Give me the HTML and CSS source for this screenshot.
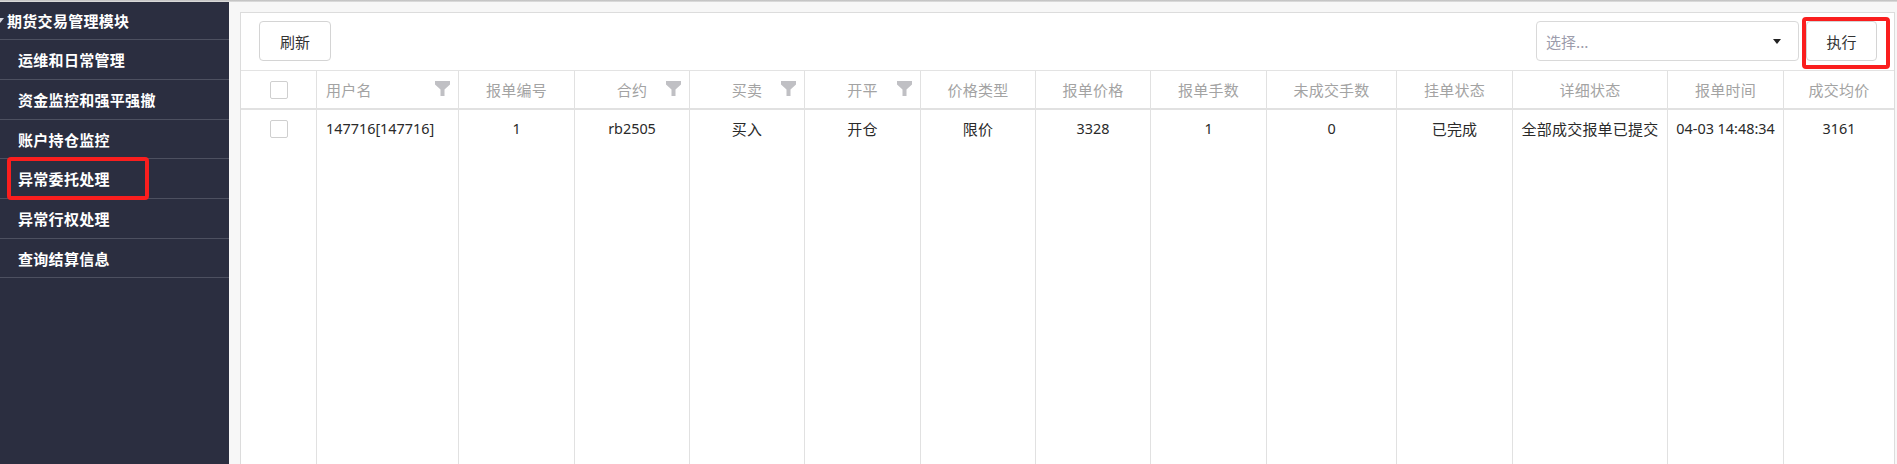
FILE: index.html
```html
<!DOCTYPE html>
<html lang="zh-CN">
<head>
<meta charset="utf-8">
<title>异常委托处理</title>
<link rel="stylesheet" href="styles.css">
</head>
<body>
<div class="topline"></div>
<div class="app">
  <aside class="sidebar">
    <ul class="menu">
      <li class="menu-item menu-root"><svg class="caret" width="8" height="5" viewBox="0 0 8 5"><path d="M0 0H8L4 5Z" fill="#d8d8e0"/></svg>期货交易管理模块</li>
      <li class="menu-item">运维和日常管理</li>
      <li class="menu-item">资金监控和强平强撤</li>
      <li class="menu-item">账户持仓监控</li>
      <li class="menu-item marked">异常委托处理<span class="mark mark-side"></span></li>
      <li class="menu-item">异常行权处理</li>
      <li class="menu-item">查询结算信息</li>
    </ul>
  </aside>
  <main class="main">
    <section class="panel">
      <div class="toolbar">
        <button class="btn">刷新</button>
        <div class="actions">
          <div class="select"><span class="placeholder">选择...</span><span class="arrow"></span></div>
          <div class="exec-wrap"><button class="btn btn-exec">执行</button><span class="mark mark-exec"></span></div>
        </div>
      </div>
      <div class="grid">
        <div class="th"><span class="cb"></span></div>
        <div class="th left">用户名<svg class="filter" width="15" height="15" viewBox="0 0 15 15"><path d="M0 0H15V3.5L9.5 8.5V15H5.5V8.5L0 3.5Z"/></svg></div>
        <div class="th">报单编号</div>
        <div class="th">合约<svg class="filter" width="15" height="15" viewBox="0 0 15 15"><path d="M0 0H15V3.5L9.5 8.5V15H5.5V8.5L0 3.5Z"/></svg></div>
        <div class="th">买卖<svg class="filter" width="15" height="15" viewBox="0 0 15 15"><path d="M0 0H15V3.5L9.5 8.5V15H5.5V8.5L0 3.5Z"/></svg></div>
        <div class="th">开平<svg class="filter" width="15" height="15" viewBox="0 0 15 15"><path d="M0 0H15V3.5L9.5 8.5V15H5.5V8.5L0 3.5Z"/></svg></div>
        <div class="th">价格类型</div>
        <div class="th">报单价格</div>
        <div class="th">报单手数</div>
        <div class="th">未成交手数</div>
        <div class="th">挂单状态</div>
        <div class="th">详细状态</div>
        <div class="th">报单时间</div>
        <div class="th last">成交均价</div>

        <div class="td"><span class="cb"></span></div>
        <div class="td left num">147716[147716]</div>
        <div class="td num">1</div>
        <div class="td num">rb2505</div>
        <div class="td">买入</div>
        <div class="td">开仓</div>
        <div class="td">限价</div>
        <div class="td num">3328</div>
        <div class="td num">1</div>
        <div class="td num">0</div>
        <div class="td">已完成</div>
        <div class="td">全部成交报单已提交</div>
        <div class="td num">04-03 14:48:34</div>
        <div class="td num last">3161</div>

        <div class="tf"></div><div class="tf"></div><div class="tf"></div><div class="tf"></div>
        <div class="tf"></div><div class="tf"></div><div class="tf"></div><div class="tf"></div>
        <div class="tf"></div><div class="tf"></div><div class="tf"></div><div class="tf"></div>
        <div class="tf"></div><div class="tf last"></div>
      </div>
    </section>
  </main>
</div>
</body>
</html>
```
FILE: styles.css
```css
* { box-sizing: border-box; }
html, body {
  margin: 0;
  height: 464px;
  overflow: hidden;
}
body {
  font-family: "Noto Sans", "Noto Sans CJK SC", sans-serif;
  font-size: 15px;
  color: #333;
  background: #f7f7f7;
}
.topline {
  height: 2px;
  background: linear-gradient(#bcbcbc, #e2e2e2);
}
.app {
  display: flex;
  height: 462px;
}

/* sidebar */
.sidebar {
  width: 229px;
  flex: none;
  background: #2b2e40;
}
.menu {
  list-style: none;
  margin: 0;
  padding: 0;
}
.menu-item {
  position: relative;
  height: 39.7px;
  border-bottom: 1px solid #4d5060;
  padding-left: 18px;
  display: flex;
  align-items: center;
  color: #fff;
  font-weight: bold;
  font-size: 15px;
  letter-spacing: 0.3px;
  font-family: "Noto Sans CJK SC", sans-serif;
}
.menu-root {
  height: 38.3px;
  padding-left: 0;
}
.caret {
  margin-left: -4px;
  margin-right: 3px;
}
.mark {
  position: absolute;
  border: 4px solid #fa1e1e;
  border-radius: 4px;
  pointer-events: none;
}
.mark-side {
  left: 7px;
  top: -2px;
  width: 142px;
  height: 43px;
}

/* main */
.main {
  flex: 1;
  padding: 10px 2px 0 11px;
  min-width: 0;
}
.panel {
  height: 100%;
  background: #fff;
  border: 1px solid #dcdcdc;
  border-bottom: none;
  display: flex;
  flex-direction: column;
}
.toolbar {
  display: flex;
  justify-content: space-between;
  align-items: center;
  padding: 8px 17px 9px 18px;
}
.btn {
  height: 40px;
  width: 72px;
  background: #fff;
  border: 1px solid #d4d4d4;
  border-radius: 4px;
  font-family: "Noto Sans CJK SC", sans-serif;
  font-size: 15px;
  color: #333;
  padding: 0;
}
.actions {
  display: flex;
  align-items: center;
  gap: 7px;
}
.select {
  width: 263px;
  height: 40px;
  border: 1px solid #d9d9d9;
  border-radius: 4px;
  display: flex;
  align-items: center;
  justify-content: space-between;
  padding: 0 17px 0 9px;
}
.placeholder {
  color: #9c9cab;
  font-family: "Noto Sans CJK SC", sans-serif;
  font-size: 15px;
}
.arrow {
  width: 0;
  height: 0;
  border-left: 4px solid transparent;
  border-right: 4px solid transparent;
  border-top: 5px solid #222;
}
.exec-wrap {
  position: relative;
}
.btn-exec {
  width: 71px;
  display: block;
}
.mark-exec {
  left: -4px;
  top: -4px;
  width: 88px;
  height: 52px;
}

/* grid table */
.grid {
  flex: 1;
  display: grid;
  grid-template-columns: 76px 142px 116px 115px 115px 116px 115px 115px 116px 130px 116px 155px 116px 110px;
  grid-template-rows: 39px 38px 1fr;
  border-top: 1px solid #e3e3e3;
}
.th, .td, .tf {
  border-right: 1px solid #e1e1e1;
  display: flex;
  align-items: center;
  justify-content: center;
  position: relative;
  white-space: nowrap;
}
.last { border-right: none; }
.th {
  border-bottom: 2px solid #e1e1e1;
  color: #a3a3a3;
  font-family: "Noto Sans CJK SC", sans-serif;
  font-size: 15px;
  letter-spacing: 0.2px;
}
.td {
  color: #2a2a2a;
  font-family: "Noto Sans CJK SC", sans-serif;
  font-size: 15px;
  letter-spacing: 0.2px;
  padding-bottom: 1px;
}
.td.num {
  font-family: "Noto Sans", sans-serif;
  font-size: 14.4px;
  letter-spacing: 0;
}
.left {
  justify-content: flex-start;
  padding-left: 9px;
}
.filter {
  position: absolute;
  right: 8px;
  top: 10px;
  fill: #c0c0c4;
}
.cb {
  width: 18px;
  height: 18px;
  border: 1px solid #cfcfcf;
  border-radius: 2px;
  background: #fff;
}
```
